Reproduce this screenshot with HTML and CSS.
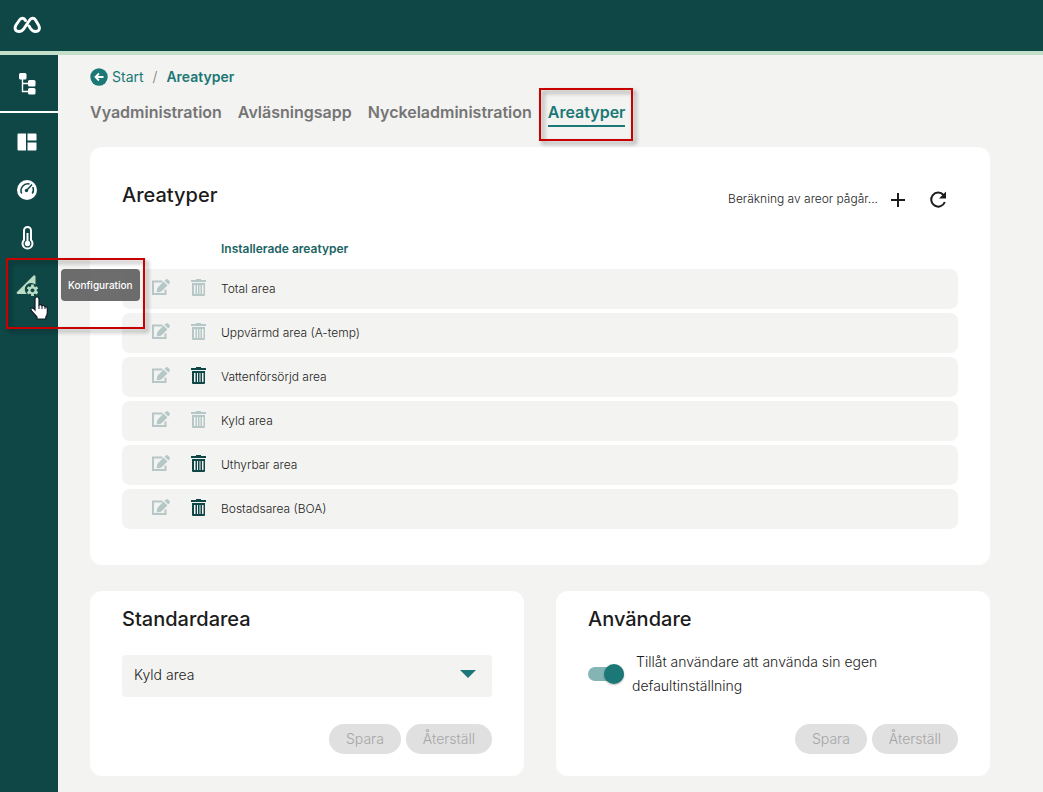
FILE: index.html
```html
<!DOCTYPE html>
<html lang="sv">
<head>
<meta charset="utf-8">
<meta name="viewport" content="width=device-width, initial-scale=1">
<title>Areatyper</title>
<link rel="stylesheet" href="styles.css">
</head>
<body>
<svg class="sprite" aria-hidden="true">
  <symbol id="edit" viewBox="0 0 18 16"><path d="M10.500 2.500H1V15h12.500v-4.500" fill="none" stroke="currentColor" stroke-width="2"/><path fill="currentColor" d="M11.500 2.500L15.500 6.500 9 12.700 4.700 13.400 5.300 9zM12.500 1.700L14 .5q1-.8 2 0l1.500 1.500q.8 1 0 2L16.400 5.500z"/></symbol>
  <symbol id="trash" viewBox="0 0 15 17"><path fill="currentColor" fill-rule="evenodd" d="M5 0h5v1h5v2H0V1h5zM1 4h13v12a1 1 0 0 1-1 1H2a1 1 0 0 1-1-1zm2 2v9h1.500V6zm3 0v9h1V6zm2.500 0v9h1V6zm2.500 0v9h1.500V6z"/></symbol>
</svg>
<header class="topbar">
  <a class="logo" href="#" aria-label="Hem">
    <svg width="28" height="18" viewBox="0 0 28 18" fill="none" stroke="#fff" stroke-width="2.900" stroke-linejoin="round" stroke-linecap="round"><path d="M12.500 4.500C11 1.500 8 1.500 6.500 4L3 9C1 12.500 2.500 15.500 6 15.500C8.500 15.500 9.800 14.500 11 12.500L16 5C18 1.500 21 1.500 22.500 4L25.500 9C27.500 12.500 26 15.500 22.500 15.500C20 15.500 18.800 14.500 17.500 12.500L16 10"/></svg>
  </a>
</header>
<div class="shell">
  <nav class="sidebar" aria-label="Huvudmeny">
    <a class="side-item side-tree" href="#" aria-label="Struktur">
      <svg width="18" height="22" viewBox="0 0 18 22" fill="#fff"><path d="M4.500 5v13.500H10M4.500 10.500H10" fill="none" stroke="#fff" stroke-width="1.400"/><rect x="1" y="0" width="7.500" height="6.500" rx="1.500"/><rect x="10" y="7" width="7.500" height="6.500" rx="1.500"/><rect x="10" y="15" width="7.500" height="6.500" rx="1.500"/></svg>
    </a>
    <div class="side-group">
      <a class="side-item" href="#" aria-label="Vyer"><svg width="20" height="18" viewBox="0 0 20 18" fill="#fff"><path d="M1.500 .5H9v17H1.500a1 1 0 0 1-1-1v-15a1 1 0 0 1 1-1zM10.500 .5h8a1 1 0 0 1 1 1V7.500h-9zM10.500 9.500h9v7a1 1 0 0 1-1 1h-8z"/></svg></a>
      <a class="side-item" href="#" aria-label="Mätare"><svg width="20" height="20" viewBox="0 0 20 20"><circle cx="10" cy="10" r="10" fill="#fff"/><path d="M4.700 13.500A6.800 6.800 0 0 1 12.500 4M15.800 7a6.800 6.800 0 0 1-.5 6.500M10 10l5-5.500" fill="none" stroke="#0f4747" stroke-width="1.500"/><circle cx="9.500" cy="10.500" r="1.700" fill="#0f4747"/></svg></a>
      <a class="side-item" href="#" aria-label="Temperatur"><svg width="13" height="24" viewBox="0 0 13 24" fill="none" stroke="#fff"><path d="M3 14V4.500a3.500 3.500 0 0 1 7 0V14a5 5 0 1 1-7 0z" stroke-width="2"/><path d="M6.500 7v10" stroke-width="2"/><circle cx="6.500" cy="17.500" r="2.700" fill="#fff" stroke="none"/></svg></a>
      <a class="side-item side-active" href="#" aria-label="Konfiguration">
        <svg width="22" height="22" viewBox="0 0 22 22"><path d="M19.500 1.500V9.600A6.400 6.400 0 0 0 10.800 19H2Q0 19 1 17L16.800 1.200Q19-.8 19.500 1.500z" fill="#badcc4"/><path d="M16.500 9.500v11.600M11.500 12.400l10 5.800M21.500 12.400l-10 5.800" stroke="#badcc4" stroke-width="2.800"/><circle cx="16.500" cy="15.300" r="4.100" fill="#badcc4"/><circle cx="16.500" cy="15.300" r="1.900" fill="#0f4747"/></svg>
        <span class="tooltip" role="tooltip">Konfiguration</span>
        <span class="marker marker-side"></span>
        <svg class="pointer" width="18" height="24" viewBox="0 0 18 24"><path d="M5 14V3a2 2 0 0 1 4 0v6q2-1 3 .7 2-.7 3 1 2.300-.5 2.300 2V17q0 2-1.500 4v2H7v-2L2 15.500Q0 12.500 1.500 12T5 14z" fill="#fff" stroke="#111827" stroke-width="1.200"/><path d="M9 9v4M12 10v3M15 11v2" stroke="#111827"/></svg>
      </a>
    </div>
  </nav>
  <main class="content">
    <nav class="crumbs" aria-label="Brödsmulor">
      <a class="crumb-link" href="#"><svg width="18" height="18" viewBox="0 0 18 18"><circle cx="9" cy="9" r="8.700" fill="#1b7876"/><path d="M13.500 9H5.500M9 5.500L5.500 9 9 12.500" fill="none" stroke="#fff" stroke-width="1.800"/></svg>Start</a>
      <span class="crumb-sep">/</span>
      <span class="crumb-current">Areatyper</span>
    </nav>
    <nav class="tabs" aria-label="Flikar">
      <a class="tab" href="#">Vyadministration</a>
      <a class="tab" href="#">Avläsningsapp</a>
      <a class="tab" href="#">Nyckeladministration</a>
      <a class="tab tab-active" href="#" aria-current="page">Areatyper<span class="marker marker-tab"></span></a>
    </nav>
    <section class="card card-list">
      <div class="card-head">
        <h2 class="title">Areatyper</h2>
        <div class="tools">
          <span class="status">Beräkning av areor pågår...</span>
          <button class="icon-btn" type="button" aria-label="Lägg till"><svg width="14" height="14" viewBox="0 0 14 14"><path d="M7 0v14M0 7h14" stroke="#1c1c1c" stroke-width="2"/></svg></button>
          <button class="icon-btn" type="button" aria-label="Uppdatera"><svg width="18" height="18" viewBox="0 0 18 18"><path d="M14.500 4A7 7 0 1 0 15.800 11" fill="none" stroke="#1c1c1c" stroke-width="2"/><path d="M17 .5V7.500H10z" fill="#1c1c1c"/></svg></button>
        </div>
      </div>
      <table class="areas">
        <thead><tr><td class="col-edit"></td><td class="col-trash"></td><th scope="col">Installerade areatyper</th></tr></thead>
        <tbody>
          <tr><td class="col-edit"><button class="row-btn" type="button" disabled aria-label="Redigera"><svg width="18" height="16"><use href="#edit"/></svg></button></td><td class="col-trash"><button class="row-btn" type="button" disabled aria-label="Ta bort"><svg width="15" height="17"><use href="#trash"/></svg></button></td><td>Total area</td></tr>
          <tr><td class="col-edit"><button class="row-btn" type="button" disabled aria-label="Redigera"><svg width="18" height="16"><use href="#edit"/></svg></button></td><td class="col-trash"><button class="row-btn" type="button" disabled aria-label="Ta bort"><svg width="15" height="17"><use href="#trash"/></svg></button></td><td>Uppvärmd area (A-temp)</td></tr>
          <tr><td class="col-edit"><button class="row-btn" type="button" disabled aria-label="Redigera"><svg width="18" height="16"><use href="#edit"/></svg></button></td><td class="col-trash"><button class="row-btn" type="button" aria-label="Ta bort"><svg width="15" height="17"><use href="#trash"/></svg></button></td><td>Vattenförsörjd area</td></tr>
          <tr><td class="col-edit"><button class="row-btn" type="button" disabled aria-label="Redigera"><svg width="18" height="16"><use href="#edit"/></svg></button></td><td class="col-trash"><button class="row-btn" type="button" disabled aria-label="Ta bort"><svg width="15" height="17"><use href="#trash"/></svg></button></td><td>Kyld area</td></tr>
          <tr><td class="col-edit"><button class="row-btn" type="button" disabled aria-label="Redigera"><svg width="18" height="16"><use href="#edit"/></svg></button></td><td class="col-trash"><button class="row-btn" type="button" aria-label="Ta bort"><svg width="15" height="17"><use href="#trash"/></svg></button></td><td>Uthyrbar area</td></tr>
          <tr><td class="col-edit"><button class="row-btn" type="button" disabled aria-label="Redigera"><svg width="18" height="16"><use href="#edit"/></svg></button></td><td class="col-trash"><button class="row-btn" type="button" aria-label="Ta bort"><svg width="15" height="17"><use href="#trash"/></svg></button></td><td>Bostadsarea (BOA)</td></tr>
        </tbody>
      </table>
    </section>
    <div class="pair">
      <section class="card card-small">
        <h2 class="title" id="std">Standardarea</h2>
        <div class="select-wrap">
          <select class="select" aria-labelledby="std"><option>Kyld area</option></select>
          <svg class="caret" width="16" height="8" viewBox="0 0 16 8"><path d="M0 0h16L8 8z" fill="#1b7876"/></svg>
        </div>
        <div class="actions"><button class="pill" type="button" disabled>Spara</button><button class="pill" type="button" disabled>Återställ</button></div>
      </section>
      <section class="card card-small">
        <h2 class="title">Användare</h2>
        <div class="switch-row">
          <input class="switch" type="checkbox" id="own-default" checked>
          <label class="switch-label" for="own-default">Tillåt användare att använda sin egen defaultinställning</label>
        </div>
        <div class="actions"><button class="pill" type="button" disabled>Spara</button><button class="pill" type="button" disabled>Återställ</button></div>
      </section>
    </div>
  </main>
</div>
</body>
</html>
```

FILE: styles.css
```css
* { box-sizing: border-box; }
body {
  margin: 0;
  min-height: 100vh;
  display: flex;
  flex-direction: column;
  background: #f3f3f1;
  color: #1c1c1c;
  font-family: Inter, "Liberation Sans", sans-serif;
  font-size: 14px;
  font-weight: 300;
}
svg { display: block; }
a { color: inherit; text-decoration: none; }
button, select { font: inherit; border: 0; }
.sprite { position: absolute; width: 0; height: 0; }

.topbar {
  display: flex;
  align-items: center;
  height: 55px;
  padding: 0 13px 2px;
  background: #0f4747;
  border-bottom: 4px solid #c2dfca;
}
.shell { display: flex; flex: 1; }
.sidebar { flex: none; width: 58px; background: #0f4747; }
.side-item {
  position: relative;
  display: flex;
  align-items: center;
  justify-content: center;
  height: 48px;
  padding-right: 4px;
}
.side-tree { height: 58px; padding-top: 2px; border-bottom: 2px solid #fff; }
.side-group { padding-top: 5px; }
.tooltip {
  position: absolute;
  z-index: 2;
  left: 61px;
  top: 7px;
  padding: 0 7px;
  border-radius: 4px;
  background: rgba(97, 97, 97, .92);
  color: #fff;
  font-size: 10px;
  font-weight: 500;
  line-height: 32px;
}
.marker {
  position: absolute;
  z-index: 3;
  border: 2px solid #c80000;
  filter: drop-shadow(3px 3px 2px rgba(0, 0, 0, .4));
  pointer-events: none;
}
.marker-side { left: 6px; top: -4px; width: 139px; height: 71px; }
.marker-tab { inset: -13px -8px -16px -9px; }
.pointer { position: absolute; z-index: 4; left: 30px; top: 34px; }

.content { flex: 1; min-width: 0; padding: 12px 53px 16px 32px; }
.crumbs { display: flex; align-items: center; gap: 9px; line-height: 20px; color: #757575; }
.crumb-link { display: flex; align-items: center; gap: 4px; color: #1b7876; font-weight: 400; }
.crumb-current { color: #1b7876; font-weight: 600; }
.tabs { display: flex; gap: 16px; margin: 14px 0 20px; }
.tab {
  position: relative;
  padding-bottom: 2px;
  border-bottom: 2px solid transparent;
  color: #757575;
  font-size: 16px;
  font-weight: 600;
  line-height: 22px;
}
.tab-active { border-color: #1b7876; color: #1b7876; }

.card { background: #fff; border-radius: 12px; }
.card-list { padding: 32px; }
.card-head { display: flex; align-items: flex-start; justify-content: space-between; }
.title { margin: 0; font-size: 20px; font-weight: 500; line-height: 32px; }
.tools { display: flex; align-items: center; padding-top: 1px; }
.status { padding-bottom: 3px; font-size: 12px; }
.icon-btn {
  display: flex;
  align-items: center;
  justify-content: center;
  width: 40px;
  height: 40px;
  padding: 0;
  background: none;
}

.areas { width: 100%; margin-top: 5px; border-spacing: 0 4px; font-size: 12px; }
.areas td, .areas th { padding: 0; height: 40px; text-align: left; }
.areas th { height: 36px; padding-top: 2px; color: #1b6464; font-weight: 600; }
.areas thead td { height: 36px; }
.areas tbody td { padding-bottom: 1px; background: #f3f3f1; }
.areas tbody td:first-child { border-radius: 8px 0 0 8px; }
.areas tbody td:last-child { border-radius: 0 8px 8px 0; }
.areas .col-edit { width: 66px; padding-left: 30px; }
.areas .col-trash { width: 33px; padding-left: 3px; }
.row-btn { display: block; padding: 0 0 3px; background: none; color: #0f4747; }
.row-btn:disabled { color: #b5c7c7; }

.pair { display: grid; grid-template-columns: 1fr 1fr; gap: 32px; margin-top: 26px; }
.card-small { display: flex; flex-direction: column; min-height: 185px; padding: 12px 32px 22px; }
.select-wrap { position: relative; margin-top: 20px; }
.select {
  appearance: none;
  width: 100%;
  height: 42px;
  padding: 0 12px 3px;
  border-radius: 4px;
  background: #f3f3f1;
  color: #1c1c1c;
}
.caret { position: absolute; right: 16px; top: 15px; pointer-events: none; }
.switch-row { display: flex; align-items: center; gap: 8px; margin-top: 15px; }
.switch {
  appearance: none;
  position: relative;
  flex: none;
  width: 36px;
  height: 14px;
  margin: 0;
  border-radius: 7px;
  background: #84b4b4;
}
.switch::before {
  content: "";
  position: absolute;
  right: 0;
  top: -3px;
  width: 20px;
  height: 20px;
  border-radius: 50%;
  background: #1b7876;
  box-shadow: 0 1px 2px rgba(0, 0, 0, .3);
}
.switch-label { line-height: 24px; text-indent: 4px; }
.actions { display: flex; justify-content: flex-end; gap: 5px; margin-top: auto; }
.pill {
  height: 30px;
  padding: 0 17px 2px;
  border-radius: 15px;
  background: #e0e0e0;
  color: #a6a6a6;
}
```
